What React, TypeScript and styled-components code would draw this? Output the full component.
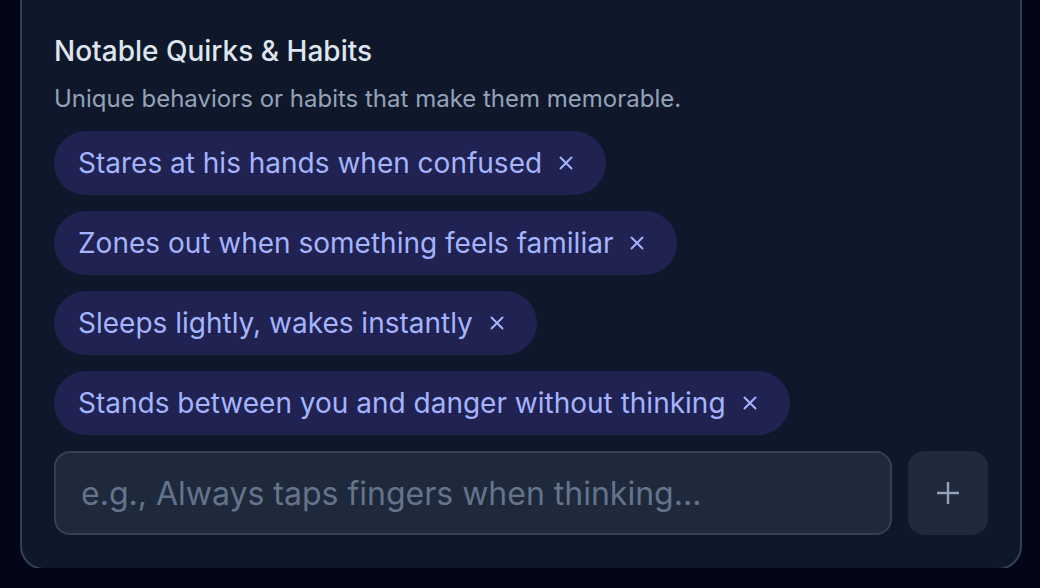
import { createGlobalStyle, styled } from "styled-components";

const quirks = [
  "Stares at his hands when confused",
  "Zones out when something feels familiar",
  "Sleeps lightly, wakes instantly",
  "Stands between you and danger without thinking",
];

const App = () => {
  return (
    <Page>
      <GlobalStyle />
      <Card>
        <Title>Notable Quirks &amp; Habits</Title>
        <Hint>Unique behaviors or habits that make them memorable.</Hint>
        <Chips>
          {quirks.map((q) => (
            <Chip key={q}>
              <span>{q}</span>
              <RemoveButton aria-label="Remove">
                <svg width="16" height="16" viewBox="0 0 16 16" fill="none">
                  <path
                    d="M2.5 2.5l11 11M13.5 2.5l-11 11"
                    stroke="currentColor"
                    strokeWidth="2"
                    strokeLinecap="round"
                  />
                </svg>
              </RemoveButton>
            </Chip>
          ))}
        </Chips>
        <AddRow>
          <Input placeholder="e.g., Always taps fingers when thinking..." />
          <AddButton aria-label="Add">
            <svg width="24" height="24" viewBox="0 0 24 24" fill="none">
              <path
                d="M12 1v22M1 12h22"
                stroke="currentColor"
                strokeWidth="2.4"
              />
            </svg>
          </AddButton>
        </AddRow>
      </Card>
    </Page>
  );
};

export default App;

const GlobalStyle = createGlobalStyle`
  html, body {
    margin: 0;
    padding: 0;
    background: #020617;
    overflow: hidden;
  }
  * {
    box-sizing: border-box;
  }
`;

const Page = styled.div`
  width: 1040px;
  height: 588px;
  padding: 0 18px 0 20px;
  font-family: Inter, "Noto Sans", sans-serif;
`;

const Card = styled.div`
  margin-top: -20px;
  padding: 49px 32px 33px;
  background: #0f172a;
  border: 2px solid #334155;
  border-radius: 24px;
`;

const Title = styled.h3`
  margin: 0;
  font-size: 28px;
  line-height: 40px;
  font-weight: 500;
  color: #dfe5ee;
`;

const Hint = styled.p`
  margin: 12px 0 16px;
  font-size: 24px;
  line-height: 32px;
  color: #94a3b8;
`;

const Chips = styled.div`
  display: flex;
  flex-direction: column;
  align-items: flex-start;
  gap: 16px;
  margin-bottom: 16px;
`;

const Chip = styled.div`
  display: inline-flex;
  align-items: center;
  gap: 16px;
  height: 64px;
  padding: 0 32px 0 24px;
  border-radius: 9999px;
  background: #202252;
  color: #a5b4fc;
  font-size: 28px;
  line-height: 40px;
`;

const RemoveButton = styled.button`
  display: flex;
  align-items: center;
  justify-content: center;
  padding: 0;
  border: none;
  background: none;
  color: #a5b4fc;
  cursor: pointer;
`;

const AddRow = styled.div`
  display: flex;
  gap: 16px;
`;

const Input = styled.input`
  flex: 1;
  height: 84px;
  padding: 0 25px;
  border: 2px solid #334155;
  border-radius: 16px;
  background: #1e293b;
  color: #e2e8f0;
  font-family: Inter, "Noto Sans", sans-serif;
  font-size: 32px;
  outline: none;

  &::placeholder {
    color: #64748b;
  }
`;

const AddButton = styled.button`
  width: 80px;
  height: 84px;
  display: flex;
  align-items: center;
  justify-content: center;
  border: none;
  border-radius: 16px;
  background: #1e293b;
  color: #94a3b8;
  cursor: pointer;
`;
